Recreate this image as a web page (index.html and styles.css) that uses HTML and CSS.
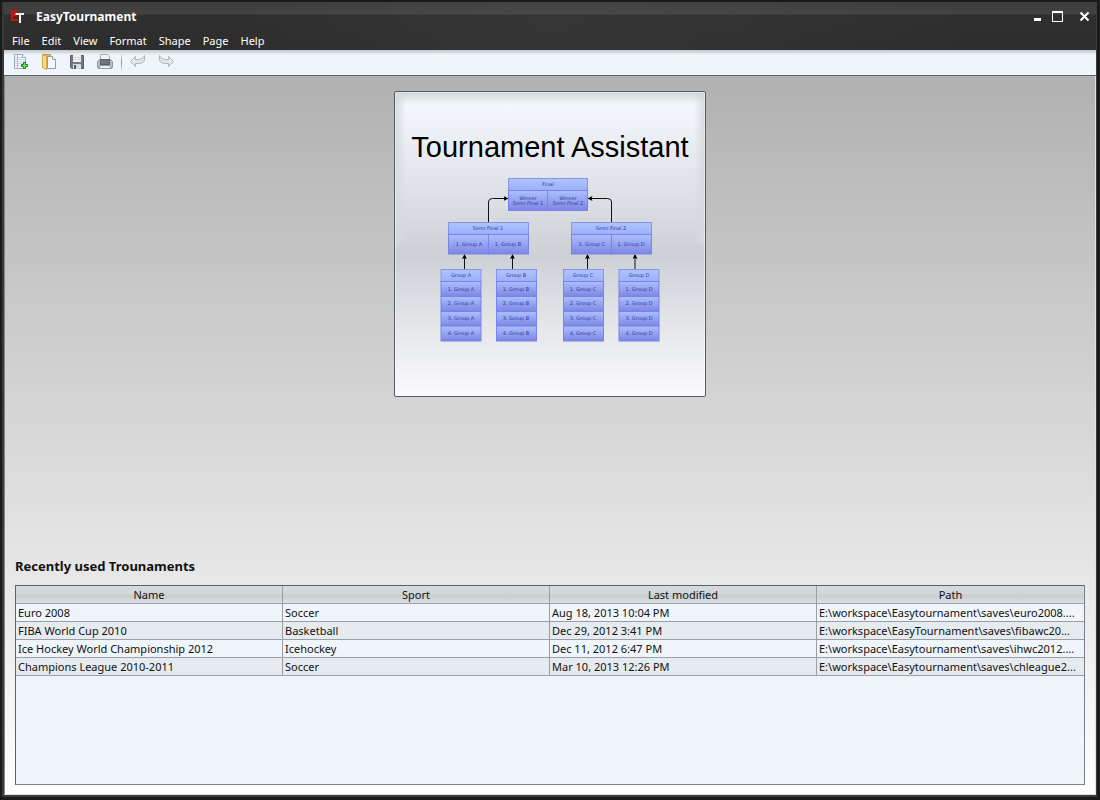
FILE: index.html
```html
<!DOCTYPE html>
<html lang="en">
<head>
<meta charset="utf-8">
<title>EasyTournament</title>
<link rel="stylesheet" href="styles.css">
</head>
<body>
<div class="window">
  <header class="chrome">
    <div class="titlebar">
      <svg class="logo" width="14" height="14" viewBox="0 0 14 14" aria-hidden="true">
        <path d="M7 1H1v9h6M1 5.500h5" fill="none" stroke="#f00000" stroke-width="2"/>
        <path d="M4.500 4H13M9 4v9" fill="none" stroke="#f4f4f4" stroke-width="2"/>
      </svg>
      <h1 class="title">EasyTournament</h1>
      <div class="controls">
        <button class="control" aria-label="Minimize"><svg width="13" height="13" viewBox="0 0 13 13"><path d="M3 8h7v3H3z" fill="#fff"/></svg></button>
        <button class="control" aria-label="Maximize"><svg width="13" height="13" viewBox="0 0 13 13"><path d="M1 1h11v11H1zM2 3v8h9V3z" fill="#fff" fill-rule="evenodd"/></svg></button>
        <button class="control" aria-label="Close"><svg width="13" height="13" viewBox="0 0 13 13"><path d="M2.500 2.500l8 8M10.500 2.500l-8 8" stroke="#fff" stroke-width="2"/></svg></button>
      </div>
    </div>
    <nav class="menubar">
      <button class="menu">File</button>
      <button class="menu">Edit</button>
      <button class="menu">View</button>
      <button class="menu">Format</button>
      <button class="menu">Shape</button>
      <button class="menu">Page</button>
      <button class="menu">Help</button>
    </nav>
  </header>
  <div class="toolbar">
    <button class="tool" aria-label="New"><svg width="16" height="16" viewBox="0 0 16 16">
      <path d="M1.500.5h8l3 3v11h-11z" fill="#fcfdff" stroke="#98a9b3"/>
      <path d="M2 3.500h8M2 5.500h10M2 7.500h10M2 9.500h10M2 11.500h10" stroke="#c3d3ec"/>
      <path d="M4.500 1v13" stroke="#f0a5a5"/>
      <path d="M9.500.5v3h3" fill="#fff" stroke="#98a9b3"/>
      <path d="M10 8h3v2h2v3h-2v2h-3v-2H8v-3h2z" fill="#159425"/>
      <path d="M11 9h1v2h2v1h-2v2h-1v-2H9v-1h2z" fill="#67ed62"/>
    </svg></button>
    <button class="tool" aria-label="Open"><svg width="16" height="16" viewBox="0 0 16 16">
      <path d="M1.500.5h8v13h-8z" fill="#e3bb62" stroke="#c79a3f"/>
      <path d="M6.500 2.500h5l3 3v9h-8z" fill="#f3f9fb" stroke="#8ca3ad"/>
      <path d="M11.500 2.500v3h3" fill="#fff" stroke="#8ca3ad"/>
      <path d="M1.500.5l4 2v13l-4-2z" fill="#f5dc91" stroke="#d0a54b"/>
    </svg></button>
    <button class="tool" aria-label="Save"><svg width="16" height="16" viewBox="0 0 16 16">
      <path d="M1.500 1.500h13v13h-12l-1-1z" fill="#777b80" stroke="#5a5e63"/>
      <path d="M4 1h8v7H4z" fill="#f0f2f4"/>
      <path d="M4 3.500h8M4 5.500h8" stroke="#d3d7da"/>
      <path d="M4 10h8v5H4z" fill="#d8dbde"/>
      <path d="M5 11h2v4H5z" fill="#565a60"/>
    </svg></button>
    <button class="tool" aria-label="Print"><svg width="16" height="16" viewBox="0 0 16 16">
      <path d="M3.500 6V.5h7l2 2V6" fill="#f3f5f7" stroke="#a5abb1"/>
      <path d="M.5 7.500l2-2h11l2 2v6H.5z" fill="#b9bdc4" stroke="#9197a0"/>
      <path d="M3 5h10v6H3z" fill="#596069"/>
      <path d="M4 7h8M4 9h8" stroke="#858c95"/>
      <path d="M1.500 14.500l2-3h9l2 3z" fill="#eceff1" stroke="#9197a0"/>
    </svg></button>
    <span class="divider"></span>
    <button class="tool" aria-label="Undo" disabled><svg width="16" height="16" viewBox="0 0 16 16">
      <path d="M.5 7.500l5-5v3h3q4.500 0 6-4 1.500 8-6 8h-3v3z" fill="#e2e6e9" stroke="#b0b6bb"/>
    </svg></button>
    <button class="tool" aria-label="Redo" disabled><svg width="16" height="16" viewBox="0 0 16 16">
      <path d="M15.500 7.500l-5-5v3h-3q-4.500 0-6-4-1.500 8 6 8h3v3z" fill="#e2e6e9" stroke="#b0b6bb"/>
    </svg></button>
  </div>
  <main class="content">
    <section class="splash">
      <h2 class="splash-title">Tournament Assistant</h2>
      <svg class="bracket" width="222" height="166" viewBox="439 177 222 166" role="img" aria-label="Tournament bracket">
        <defs>
          <linearGradient id="head" x2="0" y2="1"><stop stop-color="#adc5ff"/><stop offset="1" stop-color="#9daff9"/></linearGradient>
          <linearGradient id="cell" x2="0" y2="1"><stop stop-color="#abc0ff"/><stop offset="1" stop-color="#7d86e2"/></linearGradient>
          <marker id="tip" viewBox="0 0 5 5" refX="4" refY="2.500" markerWidth="5" markerHeight="5" markerUnits="userSpaceOnUse" orient="auto"><path d="M0 0l5 2.500L0 5l1-2.500z"/></marker>
        </defs>
        <g class="links">
          <path d="M488.500 222v-20q0-3.500 4-3.500h15"/>
          <path d="M611.500 222v-20q0-3.500-4-3.500h-19"/>
          <path d="M464.500 269v-14"/><path d="M512.500 269v-14"/>
          <path d="M587.500 269v-14"/><path d="M635 269v-14"/>
        </g>
        <g class="heads">
          <rect x="508.500" y="178.500" width="79" height="12"/>
          <rect x="448.500" y="222.500" width="80" height="12"/>
          <rect x="571.500" y="222.500" width="80" height="12"/>
          <rect x="441" y="269.500" width="40" height="12"/>
          <rect x="496.500" y="269.500" width="40" height="12"/>
          <rect x="563.500" y="269.500" width="40" height="12"/>
          <rect x="619" y="269.500" width="40" height="12"/>
        </g>
        <g class="cells">
          <rect x="508.500" y="190.500" width="39" height="20"/><rect x="547.500" y="190.500" width="40" height="20"/>
          <rect x="448.500" y="234.500" width="40" height="19.500"/><rect x="488.500" y="234.500" width="40" height="19.500"/>
          <rect x="571.500" y="234.500" width="40" height="19.500"/><rect x="611.500" y="234.500" width="40" height="19.500"/>
          <rect x="441" y="281.500" width="40" height="15"/><rect x="441" y="296.500" width="40" height="15"/><rect x="441" y="311.500" width="40" height="14.500"/><rect x="441" y="326" width="40" height="15"/>
          <rect x="496.500" y="281.500" width="40" height="15"/><rect x="496.500" y="296.500" width="40" height="15"/><rect x="496.500" y="311.500" width="40" height="14.500"/><rect x="496.500" y="326" width="40" height="15"/>
          <rect x="563.500" y="281.500" width="40" height="15"/><rect x="563.500" y="296.500" width="40" height="15"/><rect x="563.500" y="311.500" width="40" height="14.500"/><rect x="563.500" y="326" width="40" height="15"/>
          <rect x="619" y="281.500" width="40" height="15"/><rect x="619" y="296.500" width="40" height="15"/><rect x="619" y="311.500" width="40" height="14.500"/><rect x="619" y="326" width="40" height="15"/>
        </g>
        <g class="labels">
          <text x="548" y="186">Final</text>
          <text x="528" y="200">Winner</text><text x="528" y="205">Semi Final 1</text>
          <text x="568" y="200">Winner</text><text x="568" y="205">Semi Final 2</text>
          <text x="488" y="230">Semi Final 1</text><text x="469" y="246">1. Group A</text><text x="508" y="246">1. Group B</text>
          <text x="611" y="230">Semi Final 2</text><text x="592" y="246">1. Group C</text><text x="631" y="246">1. Group D</text>
          <text x="461" y="277">Group A</text><text x="461" y="291">1. Group A</text><text x="461" y="305">2. Group A</text><text x="461" y="320">3. Group A</text><text x="461" y="335">4. Group A</text>
          <text x="516" y="277">Group B</text><text x="516" y="291">1. Group B</text><text x="516" y="305">2. Group B</text><text x="516" y="320">3. Group B</text><text x="516" y="335">4. Group B</text>
          <text x="583" y="277">Group C</text><text x="583" y="291">1. Group C</text><text x="583" y="305">2. Group C</text><text x="583" y="320">3. Group C</text><text x="583" y="335">4. Group C</text>
          <text x="639" y="277">Group D</text><text x="639" y="291">1. Group D</text><text x="639" y="305">2. Group D</text><text x="639" y="320">3. Group D</text><text x="639" y="335">4. Group D</text>
        </g>
      </svg>
    </section>
    <section class="recent">
      <h2 class="recent-title" id="recent-title">Recently used Trounaments</h2>
      <div class="table-box">
        <table class="table" aria-labelledby="recent-title">
          <thead><tr><th>Name</th><th>Sport</th><th>Last modified</th><th>Path</th></tr></thead>
          <tbody>
            <tr><td>Euro 2008</td><td>Soccer</td><td>Aug 18, 2013 10:04 PM</td><td>E:\workspace\Easytournament\saves\euro2008....</td></tr>
            <tr><td>FIBA World Cup 2010</td><td>Basketball</td><td>Dec 29, 2012 3:41 PM</td><td>E:\workspace\EasyTournament\saves\fibawc20...</td></tr>
            <tr><td>Ice Hockey World Championship 2012</td><td>Icehockey</td><td>Dec 11, 2012 6:47 PM</td><td>E:\workspace\Easytournament\saves\ihwc2012....</td></tr>
            <tr><td>Champions League 2010-2011</td><td>Soccer</td><td>Mar 10, 2013 12:26 PM</td><td>E:\workspace\Easytournament\saves\chleague2...</td></tr>
          </tbody>
        </table>
      </div>
    </section>
  </main>
</div>
</body>
</html>
```
FILE: styles.css
```css
* { box-sizing: border-box; }

body {
  margin: 0;
  font: 11px/16px "Noto Sans", "Open Sans", sans-serif;
  color: #111;
}

button {
  margin: 0;
  padding: 0;
  border: 0;
  background: none;
  font: inherit;
  color: inherit;
}

svg { display: block; }

.window {
  display: flex;
  flex-direction: column;
  min-height: 100vh;
  padding: 2px 4px 5px;
  background: #3a3a3a;
  box-shadow: inset 0 0 0 2px #1a1a1a, inset -2px -2px 0 1px #1a1a1a;
}

.chrome {
  height: 48px;
  color: #fff;
  background: linear-gradient(100deg, rgba(255, 255, 255, 0) 20%, rgba(255, 255, 255, 0.04) 50%, rgba(255, 255, 255, 0) 90%),
    linear-gradient(#3c3c3c, #424242 12px, #2f2f2f 13px, #2d2d2d);
}

.titlebar {
  display: flex;
  align-items: center;
  height: 29px;
  padding: 0 5px 0 7px;
}

.logo { margin-right: 11px; }

.title {
  flex: 1;
  margin: 0;
  font-size: 12px;
  line-height: 16px;
}

.controls {
  display: flex;
  gap: 7px;
}

.control:last-child { margin-left: 7px; }

.menubar {
  display: flex;
  gap: 12px;
  height: 19px;
  padding-left: 8px;
}

.toolbar {
  display: flex;
  align-items: center;
  gap: 12px;
  height: 26px;
  padding: 0 9px 2px;
  background: linear-gradient(#bfc7ca, #eff5fa 5px);
  border-bottom: 1px solid #5e646b;
}

.divider {
  width: 1px;
  height: 18px;
  margin: 0 -4px;
  background: linear-gradient(#e5eaee, #8b9196, #d5dade);
}

.content {
  display: flex;
  flex: 1;
  flex-direction: column;
  padding: 15px 10px 9px;
  border: solid #dce4e9;
  border-width: 0 1px 1px;
  border-left-color: #81868a;
  background: linear-gradient(#b1b1b1, #fff);
}

.splash {
  align-self: center;
  width: 312px;
  height: 306px;
  padding-top: 37px;
  border: 1px solid #565d62;
  border-radius: 2px;
  background:
    linear-gradient(#d0d6d8, rgba(208, 214, 216, 0)) top / 100% 13px no-repeat,
    linear-gradient(90deg, #d5dadd, rgba(213, 218, 221, 0)) left top / 11px 50% no-repeat,
    linear-gradient(270deg, #d5dadd, rgba(213, 218, 221, 0)) right top / 11px 50% no-repeat,
    linear-gradient(#f4f8fc, #f4f8fc 4%, #cdd1d5 54%, #fbfbff);
  box-shadow: inset 0 0 0 1px rgba(255, 255, 255, 0.4);
}

.splash-title {
  margin: 0 0 11px;
  font: 29px/37px "Liberation Sans", Arial, sans-serif;
  color: #000;
  text-align: center;
}

.bracket { margin: 0 auto; }

.links {
  fill: none;
  stroke: #111;
}

.links path { marker-end: url(#tip); }

.heads rect {
  fill: url(#head);
  stroke: #8495ed;
}

.cells rect {
  fill: url(#cell);
  stroke: #7b82ea;
}

.labels {
  fill: #353b9c;
  font: 5px "DejaVu Sans", sans-serif;
  text-anchor: middle;
}

.recent {
  display: flex;
  flex: 1;
  flex-direction: column;
  margin-top: 160px;
}

.recent-title {
  margin: 0 0 10px;
  font-size: 13px;
  line-height: 18px;
}

.table-box {
  flex: 1;
  border: 1px solid #5e6368;
  border-color: #5e6368 #7b8085 #7b8085 #5e6368;
  background: #eff5fa;
}

.table {
  width: 100%;
  table-layout: fixed;
  border-collapse: separate;
  border-spacing: 0;
}

.table th,
.table td {
  height: 18px;
  padding: 1px 0 0 2px;
  border: solid #9a9fa5;
  border-width: 0 1px 1px 0;
  line-height: 16px;
  text-align: left;
  white-space: nowrap;
}

.table th {
  padding-left: 0;
  font-weight: 400;
  text-align: center;
  background: linear-gradient(#d6dadd, #d3d7da 8px, #c6cbce 9px, #dce1e4);
}

.table th:last-child,
.table td:last-child { border-right-width: 0; }

.table tbody tr:nth-child(even) { background: #e6ebef; }
```
